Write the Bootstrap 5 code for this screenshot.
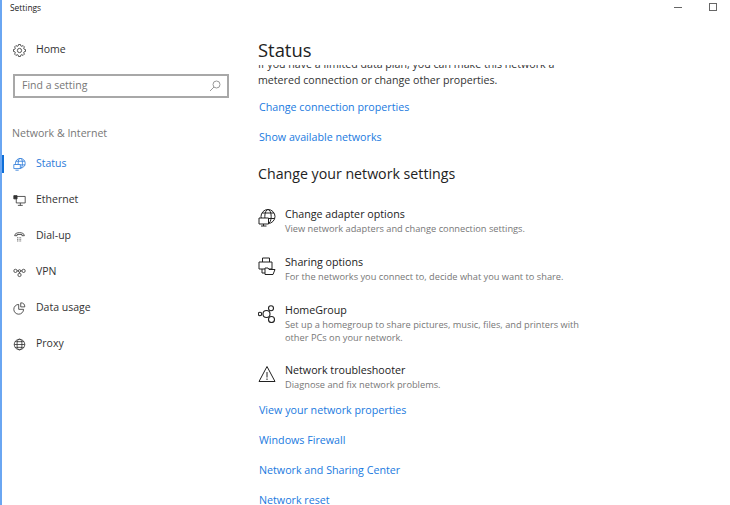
<!DOCTYPE html>
<html lang="en">
  <head>
    <meta charset="UTF-8" />
    <title>Settings</title>
    <link href="https://cdn.jsdelivr.net/npm/bootstrap@5.3.3/dist/css/bootstrap.min.css" rel="stylesheet" />
    <style>
      html, body { height: 505px; overflow: hidden; }
      body { font-family: "Open Sans", "Liberation Sans", sans-serif; background: #fff; color: #222; border-left: 2px solid #6aa6f2; }
      .app-title { font-size: 8.4px; height: 41px; padding: 2px 0 0 8px; color: #222; }
      .win-btns { position: absolute; top: 3px; right: 13px; gap: 27px; }
      .win-min { width: 8px; height: 1px; background: #666; margin-top: 4px; }
      .win-max { width: 8px; height: 8px; border: 1px solid #666; }
      .side { width: 256px; flex: none; }
      .side-item { height: 36px; padding-left: 11px; gap: 10px; font-size: 10.5px; position: relative; color: #333; }
      .side-item svg { width: 13px; height: 13px; flex: none; }
      .side-home { height: 18px; margin-bottom: 15px; }
      .side-active { color: #2b7ad9; }
      .side-active::before { content: ""; position: absolute; left: -2px; top: 9px; width: 4px; height: 18px; background: #0f6fd8; }
      .search-box { width: 216px; height: 24px; margin-left: 11px; border: 2px solid #a8a8a8; padding: 0 6px 0 7px; font-size: 10.5px; color: #777; }
      .search-box svg { width: 12px; height: 12px; }
      .side-head { font-size: 10.6px; color: #777; margin: 27px 0 5px 10px; line-height: 16px; }
      .main-col { padding-top: 37px; }
      .page-title { font-size: 18.4px; line-height: 26px; height: 28px; color: #222; }
      .scroller { height: 440px; overflow: hidden; width: 340px; }
      .scroll-inner { margin-top: -9px; }
      .body-line { font-size: 10.65px; line-height: 16px; color: #333; white-space: nowrap; }
      .blue-link { display: block; font-size: 10.7px; line-height: 16px; color: #1a7ae0; text-decoration: none; white-space: nowrap; margin-top: 14px; padding-left: 1px; }
      .first-link { margin-top: 11px; }
      .after-opts { margin-top: 10px; }
      .sub-head { font-size: 14.2px; line-height: 20px; color: #222; margin: 19px 0 23px; }
      .opt-row { gap: 9px; margin-bottom: 19px; }
      .opt-last { margin-bottom: 0; }
      .opt-row svg { width: 18px; height: 18px; flex: none; margin-top: 2px; }
      .opt-name { font-size: 10.7px; line-height: 15px; color: #222; }
      .opt-desc { font-size: 9.25px; line-height: 14px; color: #777; }
      .opt-desc-two { line-height: 13px; }
    </style>
  </head>
  <body>
    <div class="win-btns d-flex">
      <div class="win-min"></div>
      <div class="win-max"></div>
    </div>
    <div class="d-flex">
      <div class="side">
        <div class="app-title">Settings</div>
        <div class="side-item side-home d-flex align-items-center">
          <svg viewBox="0 0 16 16" fill="none" stroke="#333"><circle cx="8" cy="8" r="2.600"/><path d="M13.55 6.3L15.41 6.83V9.17L13.55 9.7L13.12 10.72L14.07 12.41L12.41 14.07L10.72 13.12L9.7 13.55L9.17 15.41H6.83L6.3 13.55L5.28 13.12L3.59 14.07L1.93 12.41L2.88 10.72L2.45 9.7L.59 9.17V6.83L2.45 6.3L2.88 5.28L1.93 3.59L3.59 1.93L5.28 2.88L6.3 2.45L6.83 .59H9.17L9.7 2.45L10.72 2.88L12.41 1.93L14.07 3.59L13.12 5.28z"/></svg>
          <span>Home</span>
        </div>
        <div class="search-box d-flex align-items-center justify-content-between">
          <span>Find a setting</span>
          <svg viewBox="0 0 12 12" fill="none" stroke="#999"><circle cx="7.500" cy="4.500" r="3.500"/><path d="M5 7l-4 4"/></svg>
        </div>
        <div class="side-head">Network &amp; Internet</div>
        <div class="side-item side-active d-flex align-items-center">
          <svg viewBox="0 0 16 16" fill="none" stroke="#2b7ad9"><circle cx="9" cy="6.500" r="6"/><ellipse cx="9" cy="6.500" rx="2.600" ry="6"/><path d="M3.500 4h11M3 8.500h12"/><path d="M1 8h8v5H1z" fill="#fff"/><path d="M3 15h4"/></svg>
          <span>Status</span>
        </div>
        <div class="side-item d-flex align-items-center">
          <svg viewBox="0 0 16 16" fill="none" stroke="#333"><path d="M4 3h11v8H4zM9 11v3M6 14h6"/><path d="M1 2h4v4H1z" fill="#333"/></svg>
          <span>Ethernet</span>
        </div>
        <div class="side-item d-flex align-items-center">
          <svg viewBox="0 0 16 16" fill="none" stroke="#333"><path d="M2 7c0-5 12-5 12 0H11V5.500H5V7z"/><path d="M5 9.500h6M5 11.500h6M5 13.500h6" stroke-dasharray="1 1"/></svg>
          <span>Dial-up</span>
        </div>
        <div class="side-item d-flex align-items-center">
          <svg viewBox="0 0 16 16" fill="none" stroke="#333"><circle cx="3" cy="6" r="2"/><circle cx="13" cy="6" r="2"/><circle cx="8" cy="6" r="1.500"/><circle cx="8" cy="11" r="2"/><path d="M5 6h1.500M9.500 6H11M8 7.500V9"/></svg>
          <span>VPN</span>
        </div>
        <div class="side-item d-flex align-items-center">
          <svg viewBox="0 0 16 16" fill="none" stroke="#333"><path d="M7 3a6 6 0 1 0 6 6H7z"/><path d="M9.500 1a5 5 0 0 1 5 5h-5z"/></svg>
          <span>Data usage</span>
        </div>
        <div class="side-item d-flex align-items-center">
          <svg viewBox="0 0 16 16" fill="none" stroke="#333"><circle cx="8" cy="8" r="6.500"/><ellipse cx="8" cy="8" rx="3" ry="6.500"/><path d="M1.500 8h13M2.500 4.500h11M2.500 11.500h11"/></svg>
          <span>Proxy</span>
        </div>
      </div>
      <div class="main-col flex-grow-1">
        <div class="page-title">Status</div>
        <div class="scroller">
          <div class="scroll-inner">
            <div class="body-line">If you have a limited data plan, you can make this network a</div>
            <div class="body-line">metered connection or change other properties.</div>
            <a class="blue-link first-link" href="#">Change connection properties</a>
            <a class="blue-link" href="#">Show available networks</a>
            <div class="sub-head">Change your network settings</div>
            <div class="opt-row d-flex">
              <svg viewBox="0 0 18 18" fill="none" stroke="#222"><circle cx="10" cy="7.500" r="7"/><ellipse cx="10" cy="7.500" rx="3.200" ry="7"/><path d="M4 4h12M3.500 9.500h13"/><path d="M1 9h9.500v6H1z" fill="#fff"/><path d="M3 17h5.500M5.500 15v2"/></svg>
              <div>
                <div class="opt-name">Change adapter options</div>
                <div class="opt-desc">View network adapters and change connection settings.</div>
              </div>
            </div>
            <div class="opt-row d-flex">
              <svg viewBox="0 0 18 18" fill="none" stroke="#222"><path d="M4.500 5V1h7v4M1 5h13v7H1z"/><path d="M4 12v4h3"/><path d="M7 11h3l1 1.500h6l-2 5H7z" fill="#fff"/></svg>
              <div>
                <div class="opt-name">Sharing options</div>
                <div class="opt-desc">For the networks you connect to, decide what you want to share.</div>
              </div>
            </div>
            <div class="opt-row d-flex">
              <svg viewBox="0 0 18 18" fill="none" stroke="#222" stroke-width="1.100"><circle cx="2" cy="9" r="1.700"/><circle cx="8.500" cy="9" r="3.500"/><circle cx="13" cy="3.200" r="2.500"/><circle cx="13.500" cy="14.500" r="3"/></svg>
              <div>
                <div class="opt-name">HomeGroup</div>
                <div class="opt-desc opt-desc-two">Set up a homegroup to share pictures, music, files, and printers with<br />other PCs on your network.</div>
              </div>
            </div>
            <div class="opt-row opt-last d-flex">
              <svg viewBox="0 0 18 18" fill="none" stroke="#222"><path d="M9 1.500L1 16.500h16z"/><path d="M9 7v5.500M9 13.500v1.500"/></svg>
              <div>
                <div class="opt-name">Network troubleshooter</div>
                <div class="opt-desc">Diagnose and fix network problems.</div>
              </div>
            </div>
            <a class="blue-link after-opts" href="#">View your network properties</a>
            <a class="blue-link" href="#">Windows Firewall</a>
            <a class="blue-link" href="#">Network and Sharing Center</a>
            <a class="blue-link" href="#">Network reset</a>
          </div>
        </div>
      </div>
    </div>
    <script src="https://cdn.jsdelivr.net/npm/bootstrap@5.3.3/dist/js/bootstrap.bundle.min.js"></script>
  </body>
</html>
